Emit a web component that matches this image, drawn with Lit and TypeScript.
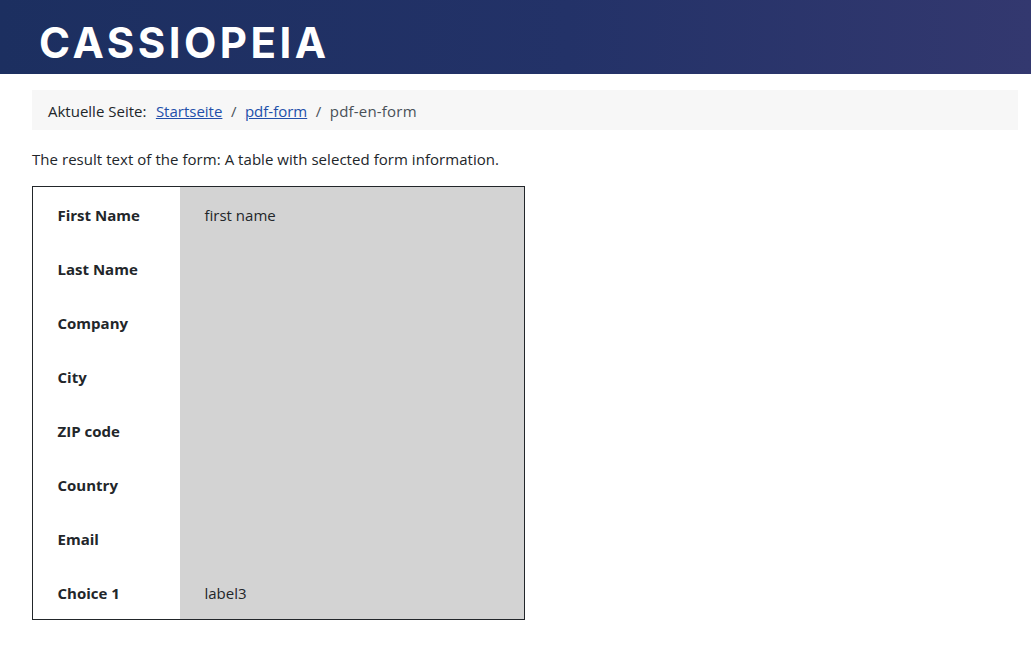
import { LitElement, html, css } from "lit";
import { customElement } from "lit/decorators.js";

const rows: [string, string][] = [
  ["First Name", "first name"],
  ["Last Name", ""],
  ["Company", ""],
  ["City", ""],
  ["ZIP code", ""],
  ["Country", ""],
  ["Email", ""],
  ["Choice 1", "label3"],
];

@customElement("app-root")
export class AppRoot extends LitElement {
  static styles = css`
    :host {
      display: block;
      min-height: 652px;
      background: #fff;
      color: #22262a;
      font-family: "Open Sans", "Noto Sans", sans-serif;
      font-size: 15px;
    }
    .header {
      height: 74px;
      box-sizing: border-box;
      padding: 18px 0 0 39px;
      background: linear-gradient(90deg, #1c2f60 0%, #233268 55%, #33386f 100%);
    }
    .logo {
      color: #fff;
      font-family: Inter, sans-serif;
      font-weight: 700;
      font-size: 42px;
      line-height: 50px;
      letter-spacing: 3.5px;
    }
    .main {
      padding: 16px 13px 0 32px;
    }
    .crumbs {
      display: flex;
      align-items: center;
      height: 40px;
      box-sizing: border-box;
      padding: 1px 0 0 16px;
      background: #f7f7f7;
      white-space: nowrap;
    }
    .crumbs a {
      color: #224faa;
      text-decoration: underline;
    }
    .lead { margin-right: 9.5px; }
    .sep { margin: 0 8.5px; color: #495057; }
    .current { color: #495057; letter-spacing: 0.2px; }
    p {
      margin: 0;
      padding-top: 18px;
      line-height: 22px;
      letter-spacing: 0.045px;
    }
    table {
      margin-top: 16px;
      width: 493px;
      border: 1px solid #22262a;
      border-collapse: separate;
      border-spacing: 0;
      box-sizing: border-box;
    }
    th, td {
      height: 54px;
      padding: 1px 0 0 24.5px;
      box-sizing: border-box;
      text-align: left;
      vertical-align: middle;
    }
    th {
      width: 147px;
      font-weight: 700;
    }
    td { background: #d3d3d3; }
  `;

  render() {
    return html`
      <div class="header"><div class="logo">CASSIOPEIA</div></div>
      <div class="main">
        <nav class="crumbs">
          <span class="lead">Aktuelle Seite:</span>
          <a href="#">Startseite</a><span class="sep">/</span>
          <a href="#">pdf-form</a><span class="sep">/</span>
          <span class="current">pdf-en-form</span>
        </nav>
        <p>The result text of the form: A table with selected form information.</p>
        <table>
          ${rows.map(([k, v]) => html`<tr><th>${k}</th><td>${v}</td></tr>`)}
        </table>
      </div>
    `;
  }
}
